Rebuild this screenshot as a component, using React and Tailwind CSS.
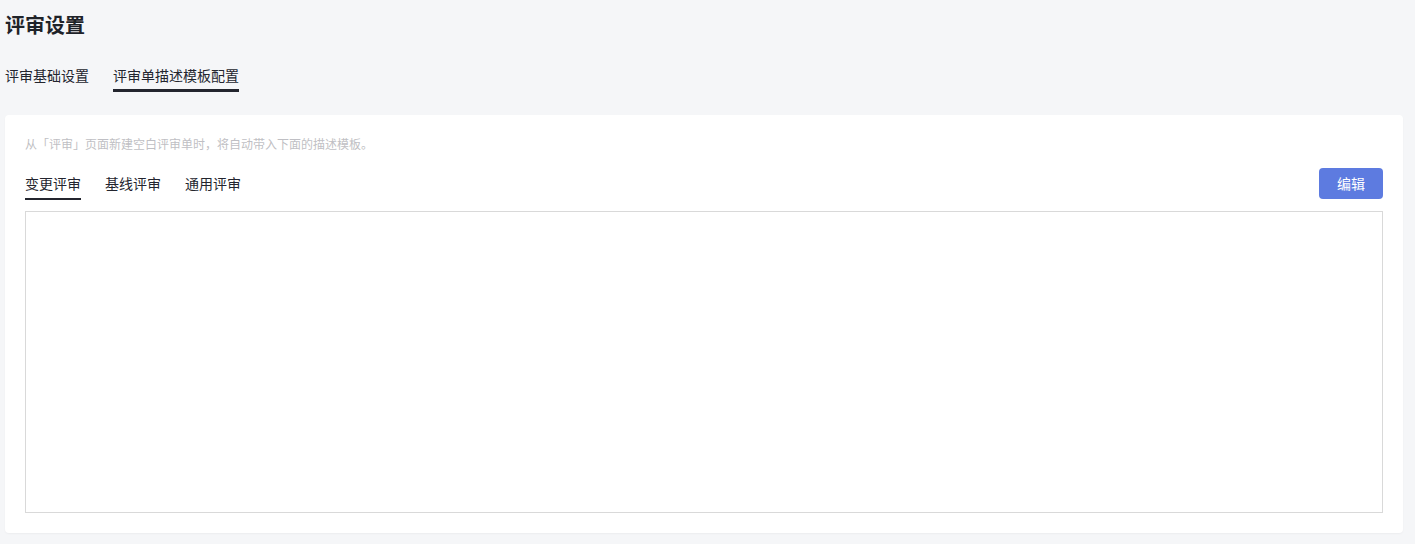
import React, { useState } from "react";

const font = { fontFamily: '"Noto Sans CJK SC", "Noto Sans", sans-serif' };

const TopTabs = ({ tabs, active, onChange }) => (
  <div className="flex gap-[24px]">
    {tabs.map((t, i) => (
      <button
        key={t}
        onClick={() => onChange(i)}
        className={`text-[14px] leading-[22px] pb-[3px] border-b-[3px] text-[#23252e] ${
          i === active ? "border-[#23252e]" : "border-transparent"
        }`}
      >
        {t}
      </button>
    ))}
  </div>
);

const SubTabs = ({ tabs, active, onChange }) => (
  <div className="flex gap-[24px]">
    {tabs.map((t, i) => (
      <button
        key={t}
        onClick={() => onChange(i)}
        className={`text-[14px] leading-[22px] pb-[4px] border-b-2 text-[#23252e] ${
          i === active ? "border-[#23252e]" : "border-transparent"
        }`}
      >
        {t}
      </button>
    ))}
  </div>
);

export default function App() {
  const [tab, setTab] = useState(1);
  const [sub, setSub] = useState(0);

  return (
    <div className="min-h-screen bg-[#f5f6f8] pl-[5px] pr-[12px] pt-[11px]" style={font}>
      <h1 className="text-[20px] leading-[28px] font-bold text-[#1f2329]">评审设置</h1>

      <div className="mt-[25px]">
        <TopTabs tabs={["评审基础设置", "评审单描述模板配置"]} active={tab} onChange={setTab} />
      </div>

      {/* template card */}
      <div className="mt-[23px] bg-white rounded-[4px] shadow-[0_1px_2px_rgba(0,0,0,0.04)] px-[20px] pt-[19px] pb-[20px]">
        <p className="text-[12px] leading-[20px] text-[#bfbfc4]">
          从「评审」页面新建空白评审单时，将自动带入下面的描述模板。
        </p>

        <div className="mt-[14px] flex justify-between items-end">
          <SubTabs tabs={["变更评审", "基线评审", "通用评审"]} active={sub} onChange={setSub} />
          <button className="mb-[1px] w-[64px] h-[31px] rounded-[4px] bg-[#5d7be0] text-white text-[14px]">
            编辑
          </button>
        </div>

        <div className="mt-[11px] h-[302px] border border-[#d9d9d9]"></div>
      </div>
    </div>
  );
}
